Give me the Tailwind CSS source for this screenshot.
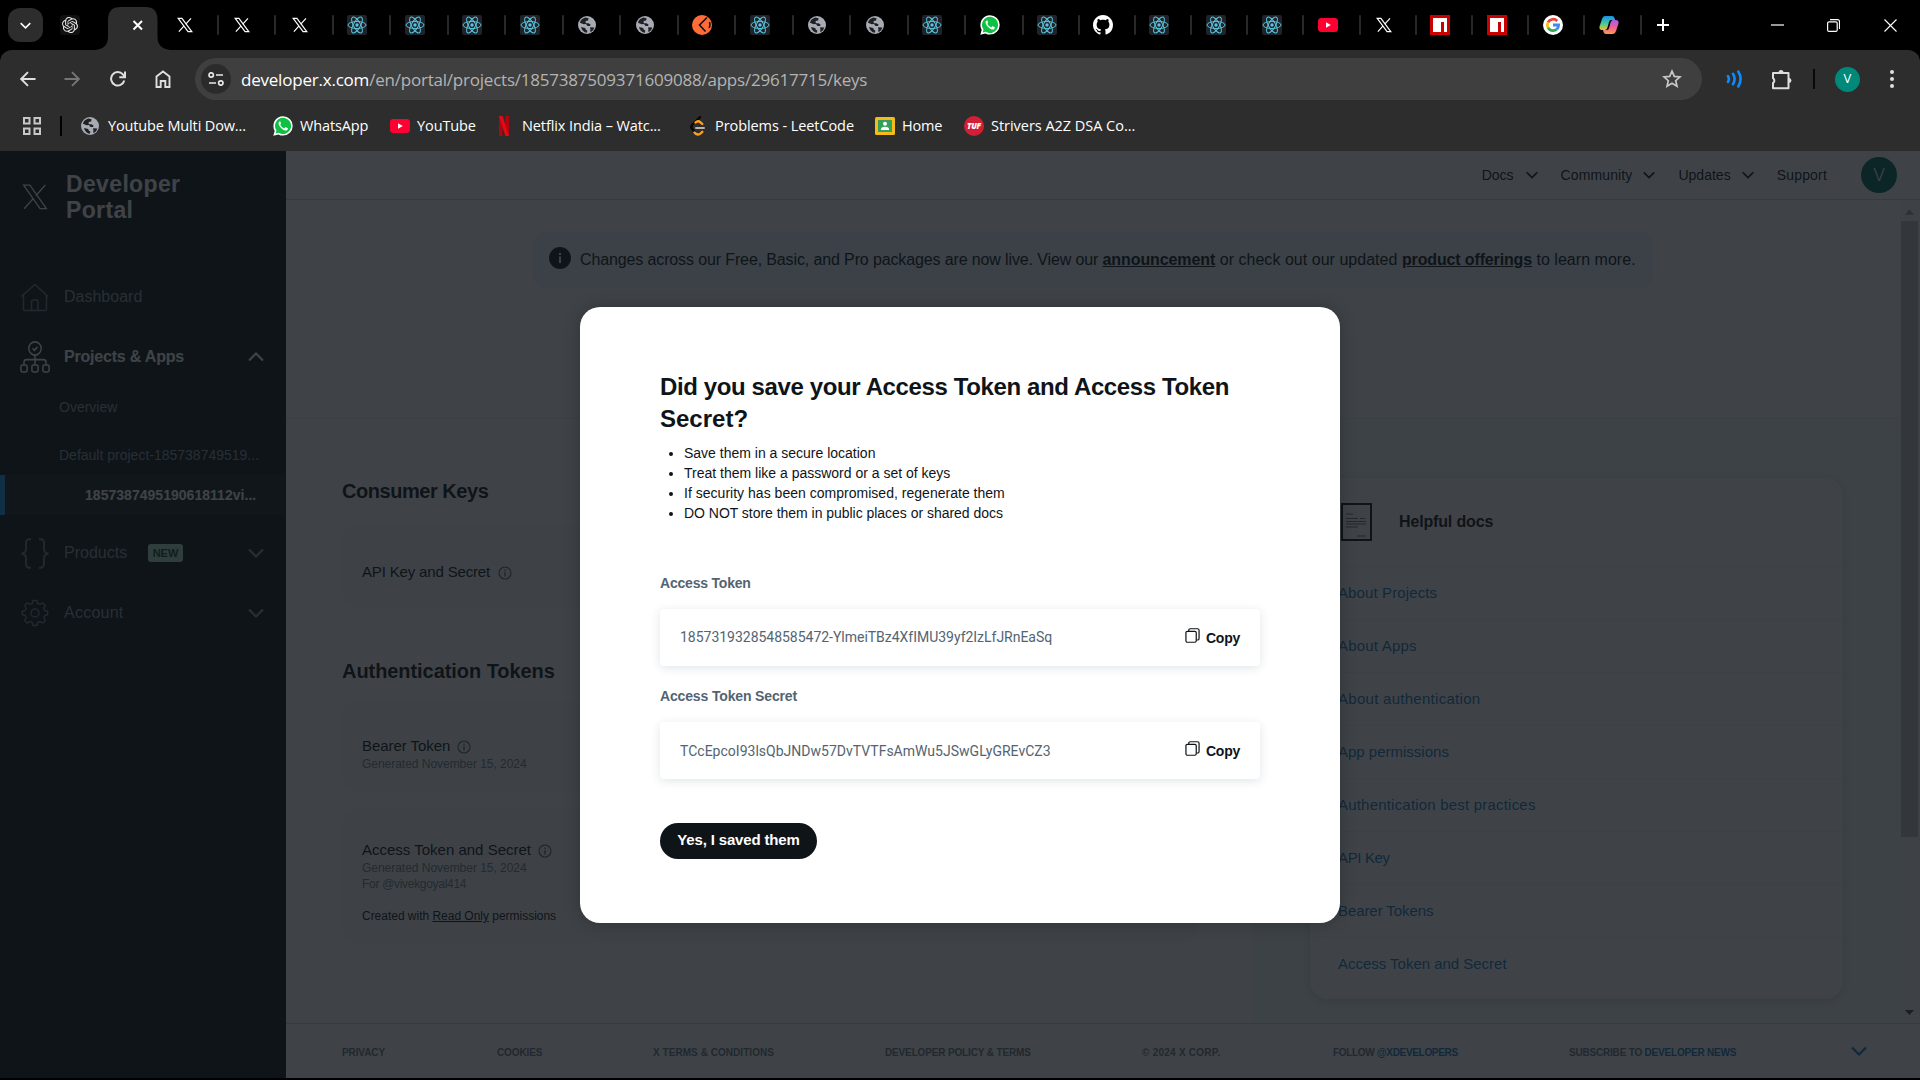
<!DOCTYPE html>
<html lang="en">
<head>
<meta charset="utf-8">
<title>Developer Portal</title>
<script src="https://cdn.jsdelivr.net/npm/@tailwindcss/browser@4"></script>
</head>
<body class="flex h-[1080px] w-[1920px] flex-col overflow-hidden bg-black font-['Liberation_Sans',Arial,sans-serif] text-[#0f1419]">

<!-- icon symbols -->
<svg class="absolute size-0" aria-hidden="true">
  <symbol id="x" viewBox="0 0 24 24"><path d="M1.8 2h5.6l14.8 20h-5.6zM21 2l-8.2 9M10.6 13.4 2.8 22" fill="none" stroke="currentColor" stroke-width="1.8"/></symbol>
  <symbol id="react" viewBox="0 0 20 20"><rect width="20" height="20" rx="2" fill="#20232a"/><g fill="none" stroke="#58c4dc" stroke-width="1"><ellipse cx="10" cy="10" rx="9" ry="3.5"/><ellipse cx="10" cy="10" rx="9" ry="3.5" transform="rotate(60 10 10)"/><ellipse cx="10" cy="10" rx="9" ry="3.5" transform="rotate(120 10 10)"/></g><circle cx="10" cy="10" r="1.7" fill="#58c4dc"/></symbol>
  <symbol id="globe" viewBox="0 0 20 20"><circle cx="10" cy="10" r="9" fill="#a8abb3"/><path d="M8.5 2.6c-2.7.6-4.9 2.4-5.6 5.2l3.8 1.5 2.2-.2 1.600 1.900 2.600.1.4-1.600-2-1.300H8.800l-.2-2.300 2.600-.3.3-2.300zM4 12l4.200 1 .7 1.800 1.400.6-.4 2.400C7 17.600 4.700 15.300 4 12zM13 12.300l4.300.1c-.6 2.300-2 3.900-4 4.700l.1-2.800z" fill="#202124"/></symbol>
  <symbol id="yt" viewBox="0 0 20 20"><rect y="3" width="20" height="14" rx="3.4" fill="#ff0033"/><path d="M8 7.200v5.600l4.800-2.800z" fill="#fff"/></symbol>
  <symbol id="wa" viewBox="0 0 20 20"><path d="M10 .2a9.700 9.700 0 0 1 0 19.400c-1.700 0-3.200-.4-4.600-1.200L.3 19.800l1.400-5A9.700 9.700 0 0 1 10 .2z" fill="#fff"/><path d="M10 1.800a8.100 8.100 0 1 1-4.300 15L2.600 17.600l.9-3A8.100 8.100 0 0 1 10 1.800z" fill="#0fc143"/><path d="M6.700 5.400c-1 .5-1.500 1.700-.9 3.200 1 2.700 3.200 4.900 6 5.900 1.400.4 2.700-.3 3-1.600.1-.5 0-.6-.4-.8l-1.700-.8c-.3-.1-.5 0-.7.2l-.7.9c-1.900-.7-3.200-2-4-3.600l.7-1c.1-.2.1-.4 0-.6l-.7-1.600c-.1-.3-.3-.3-.6-.2z" fill="#fff"/></symbol>
  <symbol id="npm" viewBox="0 0 20 20"><path d="M0 0h20v20H0z" fill="#cb0000"/><path d="M3 3h14v14h-3V7h-3v10H3z" fill="#fff"/></symbol>
  <symbol id="gh" viewBox="0 0 16 16"><path fill="#fff" d="M8 0C3.580 0 0 3.580 0 8c0 3.540 2.290 6.530 5.470 7.590.4.070.55-.17.55-.38 0-.19-.01-.82-.01-1.490-2.010.37-2.530-.49-2.690-.94-.09-.23-.48-.94-.82-1.130-.28-.15-.68-.52-.01-.53.63-.01 1.080.58 1.230.82.72 1.210 1.870.87 2.330.66.07-.52.28-.87.51-1.070-1.780-.2-3.640-.89-3.640-3.950 0-.87.31-1.590.82-2.150-.08-.2-.36-1.020.08-2.120 0 0 .67-.21 2.200.82.64-.18 1.320-.27 2-.27s1.360.09 2 .27c1.530-1.040 2.200-.82 2.200-.82.44 1.100.16 1.920.08 2.120.51.56.82 1.270.82 2.150 0 3.070-1.870 3.750-3.650 3.950.29.25.54.73.54 1.480 0 1.070-.01 1.930-.01 2.200 0 .21.15.46.55.38A8.010 8.010 0 0 0 16 8c0-4.420-3.580-8-8-8z"/></symbol>
  <symbol id="chev" viewBox="0 0 16 10"><path d="M1 1.500l7 7 7-7" fill="none" stroke="currentColor" stroke-width="2.200"/></symbol>
  <symbol id="info" viewBox="0 0 14 14"><circle cx="7" cy="7" r="6" fill="none" stroke="currentColor" stroke-width="1.100"/><path d="M7 6v4.500M7 3.600v1.300" stroke="currentColor" stroke-width="1.300"/></symbol>
  <symbol id="copy" viewBox="0 0 16 16"><g fill="none" stroke="currentColor" stroke-width="1.300"><rect x="1" y="3.600" width="11" height="11.600" rx="1.500"/><path d="M4 3.300V2.500Q4 .8 5.700.8h7.600q1.700 0 1.700 1.700v8.600q0 1.700-1.700 1.700h-1"/></g></symbol>
</svg>

<!-- tab strip -->
<div class="flex h-[50px] shrink-0 items-center bg-black">
  <div class="ml-2 flex h-[34px] w-[35px] items-center justify-center rounded-xl bg-[#2d2d2d]"><svg class="h-[7px] w-[11px] text-white"><use href="#chev"/></svg></div>
  <div class="ml-[17px] flex size-5 items-center justify-center rounded bg-[#111]"><svg class="size-4" viewBox="0 0 24 24" fill="#e8e8e8"><path d="M22.2819 9.8211a5.9847 5.9847 0 0 0-.5157-4.9108 6.0462 6.0462 0 0 0-6.5098-2.9A6.0651 6.0651 0 0 0 4.9807 4.1818a5.9847 5.9847 0 0 0-3.9977 2.9 6.0462 6.0462 0 0 0 .7427 7.0966 5.98 5.98 0 0 0 .511 4.9107 6.051 6.051 0 0 0 6.5146 2.9001A5.9847 5.9847 0 0 0 13.2599 24a6.0557 6.0557 0 0 0 5.7718-4.2058 5.9894 5.9894 0 0 0 3.9977-2.9001 6.0557 6.0557 0 0 0-.7475-7.0729zm-9.022 12.6081a4.4755 4.4755 0 0 1-2.8764-1.0408l.1419-.0804 4.7783-2.7582a.7948.7948 0 0 0 .3927-.6813v-6.7369l2.02 1.1686a.071.071 0 0 1 .038.052v5.5826a4.504 4.504 0 0 1-4.4945 4.4944zm-9.6607-4.1254a4.4708 4.4708 0 0 1-.5346-3.0137l.142.0852 4.783 2.7582a.7712.7712 0 0 0 .7806 0l5.8428-3.3685v2.3324a.0804.0804 0 0 1-.0332.0615L9.74 19.9502a4.4992 4.4992 0 0 1-6.1408-1.6464zM2.3408 7.8956a4.485 4.485 0 0 1 2.3655-1.9728V11.6a.7664.7664 0 0 0 .3879.6765l5.8144 3.3543-2.0201 1.1685a.0757.0757 0 0 1-.071 0l-4.8303-2.7865A4.504 4.504 0 0 1 2.3408 7.872zm16.5963 3.8558L13.1038 8.364 15.1192 7.2a.0757.0757 0 0 1 .071 0l4.8303 2.7913a4.4944 4.4944 0 0 1-.6765 8.1042v-5.6772a.79.79 0 0 0-.407-.667zm2.0107-3.0231l-.142-.0852-4.7735-2.7818a.7759.7759 0 0 0-.7854 0L9.409 9.2297V6.8974a.0662.0662 0 0 1 .0284-.0615l4.8303-2.7866a4.4992 4.4992 0 0 1 6.6802 4.66zM8.3065 12.863l-2.02-1.1638a.0804.0804 0 0 1-.038-.0567V6.0742a4.4992 4.4992 0 0 1 7.3757-3.4537l-.142.0805L8.704 5.459a.7948.7948 0 0 0-.3927.6813zm1.0976-2.3654l2.602-1.4998 2.6069 1.4998v2.9994l-2.5974 1.4997-2.6067-1.4997Z"/></svg></div>
  <svg class="-mr-[11px] ml-[14px] h-[43px] w-[78px] self-end" viewBox="0 0 78 43"><path d="M0 43C9 43 14 38 14 30V13Q14 0 26.500 0h25Q63.500 0 63.500 13v17c0 8 5 13 14.500 13z" fill="#2d2d2d"/><path d="M39.500 14l8.500 8.500M48 14l-8.500 8.500" stroke="#fff" stroke-width="2"/></svg>
  <div id="tabs" class="flex h-full items-center"></div>
  <svg class="ml-[15px] size-3" viewBox="0 0 12 12"><path d="M6 0v12M0 6h12" stroke="#fff" stroke-width="2"/></svg>
  <svg class="ml-[102px] h-3 w-[13px]" viewBox="0 0 13 12"><path d="M0 6h13" stroke="#fff" stroke-width="1.200"/></svg>
  <svg class="ml-[43px] size-[13px]" viewBox="0 0 13 13" fill="none" stroke="#fff" stroke-width="1.200"><rect x=".6" y="2.800" width="9.600" height="9.600" rx="1.500"/><path d="M3 .7h7.500q2 0 2 2V10"/></svg>
  <svg class="ml-[44px] size-[13px]" viewBox="0 0 13 13"><path d="M.5.500l12 12M12.500.500l-12 12" stroke="#fff" stroke-width="1.100"/></svg>
</div>

<!-- toolbar and bookmarks -->
<div class="flex h-[101px] shrink-0 flex-col rounded-t-xl bg-[#2d2d2d] font-['Open_Sans','Noto_Sans',sans-serif]">
  <div class="mt-2 flex h-[42px] items-center text-[#dedede]">
    <svg class="ml-5 size-4" viewBox="0 0 16 16" fill="none" stroke="currentColor" stroke-width="1.900"><path d="M15.500 8H1.500M8 1.200L1.200 8 8 14.800"/></svg>
    <svg class="ml-[28px] size-4 text-[#757575]" viewBox="0 0 16 16" fill="none" stroke="currentColor" stroke-width="1.900"><path d="M.5 8h14M8 1.200L14.800 8 8 14.800"/></svg>
    <svg class="ml-[30px] size-4" viewBox="0 0 16 16" fill="none" stroke="currentColor" stroke-width="2"><path d="M14.300 9.500A6.700 6.700 0 1 1 12.900 3.400L14.800 5.500M15 .5v5.700H9.300"/></svg>
    <svg class="ml-[29px] h-[18px] w-4" viewBox="0 0 16 18" fill="none" stroke="currentColor" stroke-width="1.900"><path d="M1.500 17V6.500L8 1.500l6.500 5V17h-4.200v-6H5.700v6z"/></svg>
    <div class="ml-6 flex h-[42px] w-[1507px] items-center rounded-full bg-[#3f3f3f]">
      <div class="ml-[6px] flex size-[30px] items-center justify-center rounded-full bg-[#2b2b2b]"><svg class="h-[14px] w-4" viewBox="0 0 16 14" fill="none" stroke="#e8e8e8" stroke-width="1.700"><circle cx="3.200" cy="3" r="2.200"/><path d="M8 3h7M1 11h7"/><circle cx="12.800" cy="11" r="2.200"/></svg></div>
      <div class="ml-[10px] pt-px text-[17px] leading-6 tracking-[-0.215px] whitespace-nowrap text-[#b4b4b4]"><span class="text-white">developer.x.com</span>/en/portal/projects/1857387509371609088/apps/29617715/keys</div>
      <svg class="mr-5 ml-auto size-[20px]" viewBox="0 0 20 20" fill="none" stroke="#c8c8c8" stroke-width="1.700"><path d="M10 2.200l2.300 5.200 5.700.5-4.300 3.800 1.300 5.600-5-3-5 3 1.300-5.600L2 7.900l5.700-.5z"/></svg>
    </div>
    <svg class="ml-[24px] size-[18px]" viewBox="0 0 18 18" fill="none" stroke="#0a8cff" stroke-width="2.600" stroke-linecap="round"><path d="M2 6.200q1.800 2.800 0 5.600M7 3.800q3.200 5.200 0 10.400M12.300 1.500q4.600 7.500 0 15"/></svg>
    <svg class="ml-[27px] h-[21px] w-[21px]" viewBox="0 0 21 21"><path d="M2 4h15.500v15.300H2v-5.200a3 3 0 0 0 0-5z" fill="none" stroke="currentColor" stroke-width="2" stroke-linejoin="round"/><path d="M7.500 3.500a2.500 2.500 0 0 1 5 0zM18 9a2.500 2.500 0 0 1 0 5z" fill="currentColor"/></svg>
    <div class="ml-[21px] h-5 w-[2px] bg-[#080808]"></div>
    <div class="ml-[20px] flex size-[25px] items-center justify-center rounded-full bg-[#00897b] text-[13px] text-white">V</div>
    <svg class="ml-[30px] h-[18px] w-1" viewBox="0 0 4 18" fill="#dedede"><circle cx="2" cy="2" r="2"/><circle cx="2" cy="9" r="2"/><circle cx="2" cy="16" r="2"/></svg>
  </div>
  <div class="flex h-[51px] items-center text-[14.5px] whitespace-nowrap text-white">
    <svg class="ml-[23px] size-[18px]" viewBox="0 0 18 18" fill="none" stroke="#c8c8c8" stroke-width="2"><path d="M1 1h5.500v5.500H1zM11.500 1H17v5.500h-5.500zM1 11.500h5.500V17H1zM11.500 11.500H17V17h-5.500z"/></svg>
    <div class="ml-[19px] h-5 w-[2px] bg-black"></div>
    <div class="flex w-[211px] items-center gap-2 pl-[18px]"><svg class="size-5"><use href="#globe"/></svg><span class="tracking-[-0.14px]">Youtube Multi Dow...</span></div>
    <div class="flex w-[117px] items-center gap-[7px]"><svg class="size-5"><use href="#wa"/></svg><span class="tracking-[-0.15px]">WhatsApp</span></div>
    <div class="flex w-[108px] items-center gap-[7px]"><svg class="size-5"><use href="#yt"/></svg><span class="tracking-[-0.1px]">YouTube</span></div>
    <div class="flex w-[190px] items-center gap-3"><svg class="h-5 w-3" viewBox="0 0 12 20"><path d="M1 0h3.500v20H1zM7.500 0H11v20H7.500z" fill="#b1060f"/><path d="M1 0h3.700L11 20H7.300z" fill="#e50914"/></svg><span class="tracking-[-0.1px]">Netflix India – Watc...</span></div>
    <div class="flex w-[187px] items-center gap-[7px]"><svg class="size-5" viewBox="0 0 20 20" fill="none" stroke-width="2.400" stroke-linecap="round"><path d="M12 1.200L4.200 9q-1.800 2 0 4l3 3.500" stroke="#070706"/><path d="M7.500 6.500c1.500-1.600 3.500-1.500 5-.2l1.800 1.700M6.500 16.500c2 2.600 4.500 2.500 6 1l1.800-1.700" stroke="#ffa116"/><path d="M8 12h8" stroke="#b3b3b3" stroke-width="2"/></svg><span class="tracking-[-0.08px]">Problems - LeetCode</span></div>
    <div class="flex w-[89px] items-center gap-[7px]"><svg class="size-5" viewBox="0 0 20 20"><rect y="1" width="20" height="18" rx="1.500" fill="#f5bb18"/><path d="M3 4h14v12H3z" fill="#34a05a"/><circle cx="10" cy="7.700" r="2" fill="#fff"/><path d="M5.800 14q0-3.200 4.200-3.200t4.200 3.200z" fill="#fff"/></svg><span class="tracking-[-0.2px]">Home</span></div>
    <div class="flex items-center gap-[7px]"><div class="flex size-5 items-center justify-center rounded-full bg-[#d31f35] text-[8px] font-extrabold tracking-[-0.2px] italic">TUF</div><span class="tracking-[-0.03px]">Strivers A2Z DSA Co...</span></div>
  </div>
</div>

<!-- portal -->
<div class="relative flex h-[927px] shrink-0 bg-white whitespace-nowrap">
  <aside class="w-[286px] shrink-0 bg-[#0f1419] text-[16px] text-[#8b98a5]">
    <div class="flex h-[116px] items-start pt-[20px] pl-[22px] text-white">
      <svg class="mt-[12px] h-[28px] w-[26px]" viewBox="0 0 24 24" preserveAspectRatio="none" fill="none" stroke="currentColor" stroke-width="1.200"><path d="M1.500 1.800h5.800L22.500 22h-5.800zM21.500 1.800l-8.700 9.200M10.600 13L2 22"/></svg>
      <div class="ml-[18px] text-[23px] leading-[26px] font-bold tracking-[0.35px]">Developer<br>Portal</div>
    </div>
    <div class="flex h-[60px] items-center gap-[15px] pl-5">
      <svg class="size-[29px] text-[#6e7a88]" viewBox="0 0 29 29" fill="none" stroke="currentColor" stroke-width="1.500" stroke-linejoin="round"><path d="M1.200 13.500L15 1.500l13 12M3.500 11.500V26q0 1.500 1.500 1.500h20q1.500 0 1.500-1.500V11.500M11.500 27.500V19q0-2 2-2h2.500q2 0 2 2v8.500"/></svg>
      <span>Dashboard</span>
    </div>
    <div class="flex h-[60px] items-center pl-5 font-bold text-white">
      <svg class="h-[32px] w-[30px]" viewBox="0 0 30 30" preserveAspectRatio="none" fill="none" stroke="currentColor" stroke-width="1.500"><circle cx="15" cy="7" r="6.200"/><path d="M12.500 7l2 1.800 3-3.300M15 13v9M4 22v-2q0-2.500 2.500-2.500h17q2.500 0 2.500 2.500v2"/><rect x=".9" y="22.500" width="6.200" height="6.500" rx="1.500"/><rect x="11.900" y="22.500" width="6.200" height="6.500" rx="1.500"/><rect x="22.900" y="22.500" width="6.200" height="6.500" rx="1.500"/></svg>
      <span class="ml-[14px] tracking-[-0.2px]">Projects &amp; Apps</span>
      <svg class="mr-[22px] ml-auto h-[10px] w-4 rotate-180"><use href="#chev"/></svg>
    </div>
    <div class="flex h-10 items-center pl-[59px] text-[14px]">Overview</div>
    <div class="mt-2 flex h-10 items-center pl-[59px] text-[14px]">Default project-185738749519...</div>
    <div class="flex h-10 items-center border-l-[5px] border-[#1d9bf0] bg-[#1a2126] pl-[80px] text-[14px] font-bold tracking-[0.03px] text-white">1857387495190618112vi...</div>
    <div class="mt-2 flex h-[60px] items-center pl-[21px]">
      <svg class="h-[31px] w-7 text-[#6e7a88]" viewBox="0 0 28 29" preserveAspectRatio="none" fill="none" stroke="currentColor" stroke-width="1.900"><path d="M10 1.200H8.500Q5 1.200 5 5v5q0 4-4.500 4.500Q5 15 5 19v5q0 3.800 3.500 3.800H10M18 1.200h1.500Q23 1.200 23 5v5q0 4 4.500 4.500Q23 15 23 19v5q0 3.800-3.500 3.800H18"/></svg>
      <span class="ml-[15px] w-[64px]">Products</span>
      <span class="ml-5 flex h-[18px] w-[35px] items-center justify-center rounded-[3px] bg-[#b0e0c8] text-[11px] font-bold text-[#0b4a35]">NEW</span>
      <svg class="mr-[22px] ml-auto h-[10px] w-4"><use href="#chev"/></svg>
    </div>
    <div class="flex h-[60px] items-center pl-[21px]">
      <svg class="size-7 text-[#6e7a88]" viewBox="0 0 28 28" fill="none" stroke="currentColor" stroke-width="1.400" stroke-linejoin="round"><circle cx="14" cy="14" r="4"/><path d="M12 1.500h4l.8 3 2.200.9 2.800-1.500 2.600 2.600L22.800 9.300l.9 2.200 3 .7v3.600l-3 .7-.9 2.200 1.600 2.800-2.600 2.600L19 22.600l-2.200.9-.8 3h-4l-.8-3-2.200-.9-2.800 1.500-2.600-2.600 1.600-2.800-.9-2.200-3-.7v-3.600l3-.7.9-2.200L3.600 6.500l2.600-2.600L9 5.400l2.200-.9z"/></svg>
      <span class="ml-[15px] tracking-[0.25px]">Account</span>
      <svg class="mr-[22px] ml-auto h-[10px] w-4"><use href="#chev"/></svg>
    </div>
  </aside>

  <main class="flex min-w-0 flex-1 flex-col">
    <nav class="flex h-[49px] shrink-0 items-center justify-end border-b border-[#cfd5d9] pr-[23px] text-[14px]">
      <span>Docs</span><svg class="mr-[23px] ml-[12px] h-[8px] w-[12px]"><use href="#chev"/></svg>
      <span class="tracking-[0.12px]">Community</span><svg class="mr-[23px] ml-[11px] h-[8px] w-[12px]"><use href="#chev"/></svg>
      <span class="tracking-[0.02px]">Updates</span><svg class="mr-[23px] ml-[11px] h-[8px] w-[12px]"><use href="#chev"/></svg>
      <span class="tracking-[0.18px]">Support</span>
      <div class="ml-[34px] flex size-9 items-center justify-center rounded-full bg-[#00695c] font-['Roboto',sans-serif] text-[19px] font-light text-white">V</div>
    </nav>

    <div class="flex h-[823px] shrink-0">
      <div class="flex flex-1 flex-col">
        <div class="flex h-[219px] shrink-0 justify-center border-b-2 border-[#f3f5f6] pt-8">
          <div class="flex h-14 w-[1120px] items-center rounded-xl bg-[#e8f5fd] pl-4">
            <svg class="-mt-1 size-[22px] shrink-0" viewBox="0 0 22 22"><circle cx="11" cy="11" r="11" fill="#0f1419"/><path d="M11 9.500V16M11 6v2" stroke="#e8f5fd" stroke-width="2"/></svg>
            <p class="ml-[9px] text-[16px] tracking-[0.03px]"><span class="tracking-[-0.125px]">Changes across our Free, Basic, and Pro packages are now live. View our </span><b class="tracking-[-0.09px] underline">announcement</b> or check out our updated <b class="tracking-[-0.14px] underline">product offerings</b> to learn more.</p>
          </div>
        </div>
        <div class="flex flex-1">
          <section class="w-[967px] pr-14 pl-14">
            <h2 class="mt-[59px] text-[20px] leading-[26px] font-bold tracking-[-0.46px]">Consumer Keys</h2>
            <div class="mt-5 flex h-[84px] items-center gap-2 rounded-2xl bg-[#f7f9f9] px-5 pt-3 text-[15px]"><span class="tracking-[-0.16px]">API Key and Secret</span><svg class="mt-0.5 size-[14px] text-[#536471]"><use href="#info"/></svg></div>
            <h2 class="mt-[50px] text-[20px] leading-[26px] font-bold tracking-[-0.06px]">Authentication Tokens</h2>
            <div class="mt-[18px] h-[90px] rounded-2xl bg-[#f7f9f9] px-5 pt-[34px]">
              <div class="flex h-5 items-center gap-[7px] text-[15px]"><span class="tracking-[-0.06px]">Bearer Token</span><svg class="mt-0.5 size-[14px] text-[#536471]"><use href="#info"/></svg></div>
              <div class="text-[12px] leading-4 tracking-[-0.03px] text-[#75838e]">Generated November 15, 2024</div>
            </div>
            <div class="mt-4 h-[136px] rounded-2xl bg-[#f7f9f9] px-5 pt-8">
              <div class="flex h-5 items-center gap-[7px] text-[15px]"><span>Access Token and Secret</span><svg class="mt-0.5 size-[14px] text-[#536471]"><use href="#info"/></svg></div>
              <div class="text-[12px] leading-4 tracking-[-0.03px] text-[#75838e]">Generated November 15, 2024<br><span class="tracking-[-0.3px]">For @vivekgoyal414</span></div>
              <div class="mt-4 text-[12px] leading-4 tracking-[-0.02px]">Created with <u>Read Only</u> permissions</div>
            </div>
          </section>
          <section class="flex-1 bg-[#f5f9f9] pt-[59px] pr-[57px] pl-[57px]">
            <div class="h-[521px] rounded-[18px] bg-white shadow-[0_2px_10px_rgba(101,119,134,0.25)]">
              <div class="flex h-[88px] items-center pl-[31px]">
                <svg class="h-[38px] w-[31px]" viewBox="0 0 31 38" fill="none"><rect x="1" y="1" width="29" height="36" stroke="#0f1419" stroke-width="2"/><path d="M5 11h7M5 15.500h12M19 15.500h5M5 18.500h20M5 21h20M5 24h12M16 33h9" stroke="#6b7780" stroke-width="1.200"/></svg>
                <b class="ml-[27px] text-[16px] tracking-[-0.15px]">Helpful docs</b>
              </div>
              <div class="text-[15px] tracking-[0.2px] text-[#1a78c2]">
                <div class="flex h-[53px] items-center border-t border-[#eff3f4] pl-7 tracking-[0.12px]">About Projects</div>
                <div class="flex h-[53px] items-center border-t border-[#eff3f4] pl-7">About Apps</div>
                <div class="flex h-[53px] items-center border-t border-[#eff3f4] pl-7 tracking-[0.28px]">About authentication</div>
                <div class="flex h-[53px] items-center border-t border-[#eff3f4] pl-7 tracking-[0px]">App permissions</div>
                <div class="flex h-[53px] items-center border-t border-[#eff3f4] pl-7">Authentication best practices</div>
                <div class="flex h-[53px] items-center border-t border-[#eff3f4] pl-7 tracking-[-0.35px]">API Key</div>
                <div class="flex h-[53px] items-center border-t border-[#eff3f4] pl-7 tracking-[-0.08px]">Bearer Tokens</div>
                <div class="flex h-[53px] items-center border-t border-[#eff3f4] pl-7 tracking-[-0.02px]">Access Token and Secret</div>
              </div>
            </div>
          </section>
        </div>
      </div>
      <div class="flex w-5 flex-col items-center bg-[#f8f9fa] pr-[2px]">
        <svg class="mt-[9px] h-[6px] w-[9px]" viewBox="0 0 8 5"><path d="M4 0l4 5H0z" fill="#a3a3a3"/></svg>
        <div class="mt-[6px] h-[616px] w-[17px] bg-[#c1c1c1]"></div>
        <svg class="mt-auto mb-[8px] h-[5px] w-[9px]" viewBox="0 0 9 5"><path d="M0 0h9L4.500 5z" fill="#4d4d4d"/></svg>
      </div>
    </div>

    <footer class="flex flex-1 items-center border-t border-[#cfd5d9] pt-[3px] pl-14 text-[10px] font-bold text-[#6a7883]">
      <span class="w-[155px] tracking-[-0.1px]">PRIVACY</span>
      <span class="w-[156px] tracking-[-0.1px]">COOKIES</span>
      <span class="w-[232px] tracking-[0.05px]">X TERMS &amp; CONDITIONS</span>
      <span class="w-[257px] tracking-[-0.15px]">DEVELOPER POLICY &amp; TERMS</span>
      <span class="w-[191px] tracking-[0.25px]">© 2024 X CORP.</span>
      <span class="w-[236px] tracking-[-0.32px]">FOLLOW <span class="text-[#1a78c2]">@XDEVELOPERS</span></span>
      <span class="w-[282px] tracking-[-0.2px]">SUBSCRIBE TO <span class="text-[#1a78c2]">DEVELOPER NEWS</span></span>
      <svg class="-mt-1 h-[10px] w-4 text-[#1a78c2]"><use href="#chev"/></svg>
    </footer>
  </main>

  <!-- dimmed backdrop with dialog -->
  <div class="absolute inset-0 flex items-center justify-center bg-[#0f1419]/80 pt-px">
    <div class="h-[616px] w-[760px] rounded-[20px] bg-white px-20 pt-16 shadow-[0_0_16px_rgba(0,0,0,0.25)]">
      <h1 class="text-[24px] leading-8 font-bold tracking-[-0.38px]">Did you save your Access Token and Access Token<br><span class="tracking-[0px]">Secret?</span></h1>
      <ul class="mt-2 list-disc pl-6 text-[14px] leading-5">
        <li>Save them in a secure location</li>
        <li>Treat them like a password or a set of keys</li>
        <li class="tracking-[0.02px]">If security has been compromised, regenerate them</li>
        <li class="tracking-[-0.03px]">DO NOT store them in public places or shared docs</li>
      </ul>
      <div class="mt-[50px] text-[14px] leading-5 font-bold tracking-[-0.2px] text-[#536471]">Access Token</div>
      <div class="mt-4 flex h-[57px] items-center rounded bg-white px-5 text-[14px] shadow-[0_2px_10px_rgba(101,119,134,0.2)]">
        <span class="font-['Roboto',sans-serif] tracking-[-0.02px] text-[#536471]">1857319328548585472-YlmeiTBz4XfIMU39yf2IzLfJRnEaSq</span>
        <svg class="-mt-1 ml-auto size-[15px]"><use href="#copy"/></svg><b class="ml-[6px] pt-px tracking-[-0.25px]">Copy</b>
      </div>
      <div class="mt-5 text-[14px] leading-5 font-bold tracking-[-0.15px] text-[#536471]">Access Token Secret</div>
      <div class="mt-4 flex h-[57px] items-center rounded bg-white px-5 text-[14px] shadow-[0_2px_10px_rgba(101,119,134,0.2)]">
        <span class="pt-px font-['Roboto',sans-serif] tracking-[0.015px] text-[#536471]">TCcEpcoI93lsQbJNDw57DvTVTFsAmWu5JSwGLyGREvCZ3</span>
        <svg class="-mt-1 ml-auto size-[15px]"><use href="#copy"/></svg><b class="ml-[6px] pt-px tracking-[-0.25px]">Copy</b>
      </div>
      <button class="mt-11 flex h-9 w-[157px] items-center justify-center rounded-full bg-[#0f1419] pb-[2px] text-[15px] font-bold tracking-[-0.15px] text-white">Yes, I saved them</button>
    </div>
  </div>
</div>

<script>
const own = {
  postman: '<svg class="size-5" viewBox="0 0 20 20"><circle cx="10" cy="10" r="10" fill="#ff6c37"/><path d="M15 2.500L7.500 10l6 6.500M17.500 7q1.200 3-.3 6" fill="none" stroke="#111" stroke-width="1.600"/></svg>',
  google: '<svg class="size-5" viewBox="0 0 20 20" fill="none" stroke-width="2.800"><circle cx="10" cy="10" r="10" fill="#fff"/><path d="M14.200 6A5.700 5.700 0 0 0 5 7.300" stroke="#ea4335"/><path d="M5 7.300a5.700 5.700 0 0 0 0 5.400" stroke="#fbbc05"/><path d="M5 12.700a5.700 5.700 0 0 0 8.800 1.500" stroke="#34a853"/><path d="M13.800 14.200A5.700 5.700 0 0 0 15.600 10H10" stroke="#4285f4"/></svg>',
  copilot: '<svg class="size-5" viewBox="0 0 20 20"><defs><linearGradient id="ca" x2="0" y2="1"><stop stop-color="#1b8fe8"/><stop offset=".5" stop-color="#3cc8a0"/><stop offset="1" stop-color="#f5c02c"/></linearGradient><linearGradient id="cb" x2="0" y2="1"><stop stop-color="#a05ff0"/><stop offset=".5" stop-color="#ee5c9a"/><stop offset="1" stop-color="#ff9a4a"/></linearGradient></defs><path d="M6 1h7q2 0 2.500 2l.6 2H12q-1.500 0-2 2l-1.700 6q-.6 2-2.500 2H3Q0 15 .5 11.500L3 4q.8-3 3-3z" fill="url(#ca)"/><path d="M14 19H7q-2 0-2.500-2L4 15h4q1.500 0 2-2l1.700-6q.6-2 2.500-2H17q3 0 2.500 3.500L17 16q-.8 3-3 3z" fill="url(#cb)"/></svg>'
};
const order = ['x','x','x','react','react','react','react','globe','globe','postman','react','globe','globe','react','wa','react','gh','react','react','react','yt','x','npm','npm','google','copilot'];
document.getElementById('tabs').innerHTML = order.map((n, i) => {
  const icon = own[n] || (n === 'x'
    ? '<svg class="mx-[2px] size-4 text-white"><use href="#x"/></svg>'
    : `<svg class="size-5"><use href="#${n}"/></svg>`);
  const cell = i < 15 ? 'flex w-[57.5px] items-center justify-between pl-[13.5px]' : 'flex w-[56.2px] items-center justify-between pl-[13.5px]';
  return `<div class="${cell}">${icon}<i class="h-5 w-[2px] rounded bg-[#282828]"></i></div>`;
}).join('');
</script>
</body>
</html>
